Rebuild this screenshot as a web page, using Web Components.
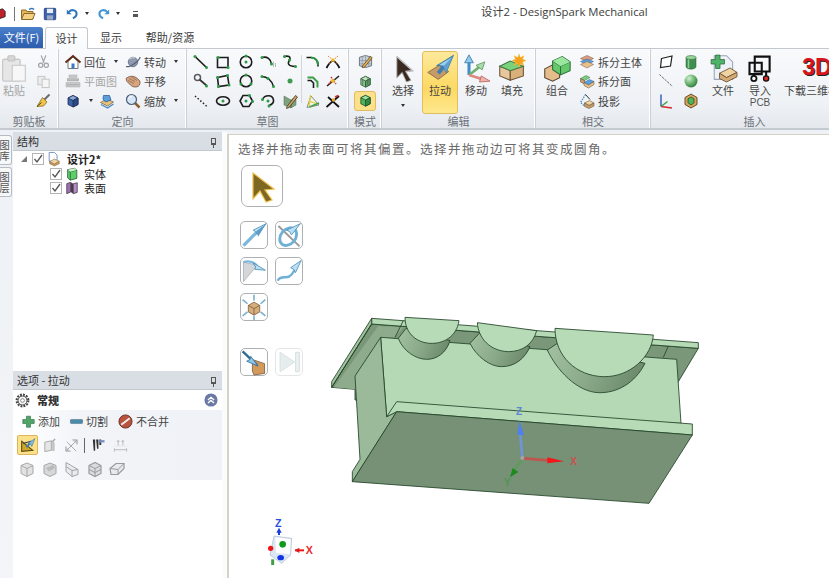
<!DOCTYPE html>
<html lang="zh">
<head>
<meta charset="utf-8">
<title>DesignSpark Mechanical</title>
<style>
  html, body { margin: 0; height: 100%; background: #fff; overflow: hidden; }
  body { font: 11px "Noto Sans CJK SC", "Noto Sans", sans-serif; color: #444; }
</style>
</head>
<body>
<dsm-app></dsm-app>
<script>
const dot = (x, y, r = 3, c = "#2f9a46") => `<circle cx="${x}" cy="${y}" r="${r}" fill="${c}"/>`;
const ln = (d, c = "#1c1c1c", w = 3.2) => `<path d="${d}" fill="none" stroke="${c}" stroke-width="${w}"/>`;
const cube = (a, b, c, e = "#555") => `<path d="M6 10 16 5l10 5v13l-10 5-10-5z" fill="${a}" stroke="${e}" stroke-width="1.6"/><path d="M6 10l10 5 10-5-10-5z" fill="${b}" stroke="${e}" stroke-width="1.6"/><path d="M16 15v13l10-5V10z" fill="${c}" stroke="${e}" stroke-width="1.6"/>`;
const grey = (s) => `<g opacity=".42" style="filter:grayscale(1)">${s}</g>`;

const icons = {
  // quick access
  app: `<path d="M-14 12 8 4l6 6v12L-8 30z" fill="#c0202a" stroke="#222" stroke-width="2"/>`,
  open: `<path d="M3 8h9l2 3h12v15H3z" fill="#e5b35a" stroke="#8a6a2c" stroke-width="2"/><path d="M8 15h22l-5 12H3z" fill="#f3d083" stroke="#8a6a2c" stroke-width="2"/><path d="M18 7c4-3 7-3 10 0" fill="none" stroke="#3b79b8" stroke-width="3"/>`,
  save: `<rect x="3" y="3" width="26" height="26" rx="2" fill="#3c62ad" stroke="#233f7a" stroke-width="2"/><rect x="9" y="4" width="14" height="10" fill="#e8eef6"/><rect x="9" y="19" width="14" height="10" fill="#99a9c5"/>`,
  undo: `<path d="M7 12c8-8 20-4 19 6-1 6-5 8-9 10" fill="none" stroke="#2e75c2" stroke-width="5"/><path d="M2 6v12h12z" fill="#2e75c2"/>`,
  redo: `<path d="M25 12c-8-8-20-4-19 6 1 6 5 8 9 10" fill="none" stroke="#3f93d6" stroke-width="5"/><path d="M30 6v12H18z" fill="#3f93d6"/>`,
  // clipboard
  paste: `<rect x="3" y="6" width="20" height="25" rx="2" fill="#e6e6e6" stroke="#c9c9c9" stroke-width="1.5"/><rect x="9" y="2" width="8" height="6" rx="1" fill="#d6d6d6" stroke="#bdbdbd"/><rect x="14" y="13" width="15" height="18" fill="#f7f7f7" stroke="#cfcfcf" stroke-width="1.5"/>`,
  cut: `<g stroke="#a3a3a3" fill="none" stroke-width="2.6"><path d="M11 3l6 16M21 3l-6 16"/><circle cx="10" cy="24" r="4.5"/><circle cx="22" cy="24" r="4.5"/></g>`,
  copy: `<rect x="4" y="5" width="15" height="18" fill="#ececec" stroke="#c2c2c2" stroke-width="2"/><rect x="13" y="11" width="15" height="18" fill="#f5f5f5" stroke="#c2c2c2" stroke-width="2"/>`,
  brush: `<path d="M19 13 29 3" stroke="#6a6a6a" stroke-width="4"/><path d="M15 9l9 9-7 8-13 1z" fill="#eec44c" stroke="#8a6d1e" stroke-width="1.6"/><path d="M4 27l9-8" stroke="#55431a" stroke-width="2"/>`,
  // orient
  home: `<path d="M6 15v14h20V15L16 6z" fill="#fff" stroke="#777" stroke-width="2"/><path d="M1 17 16 4l15 13" fill="none" stroke="#5f2f18" stroke-width="4"/><rect x="13" y="19" width="6" height="10" fill="#3b78c2"/>`,
  spin: `<circle cx="16" cy="16" r="9.5" fill="#8f9ab0" stroke="#5a6479" stroke-width="1.5"/><path d="M2 25C10 28 30 12 30 6" fill="none" stroke="#56607a" stroke-width="2.4"/><path d="M9 10c4-3 8-3 11-2" stroke="#d8dee9" stroke-width="2" fill="none"/>`,
  plan: `<g fill="#c9c9c9" stroke="#a8a8a8"><path d="M2 19h28v9H2z"/><rect x="8" y="4" width="16" height="5"/><rect x="5" y="11" width="22" height="5"/></g><path d="M5 23.5h22M5 14h22" stroke="#8e8e8e" stroke-width="2" stroke-dasharray="2 2"/>`,
  pan: `<path d="M2 11c6-5 13-6 20-2l7 6c2 3 1 10-3 12-6 2-11 1-15-3L4 17z" fill="#d9a57e" stroke="#7a5a48" stroke-width="1.8"/><path d="M8 11l12 6M6 15l12 6M13 8l11 7" stroke="#8a6a58" stroke-width="1.6"/>`,
  bluecube: cube("#3a63a8", "#8aa9d8", "#2b4a85", "#1f2e52"),
  stack: `<path d="M3 19 15 12l14 6-12 8z" fill="#e8c27e" stroke="#7a6a48" stroke-width="1.6"/><path d="M4 23l13 7 12-8" fill="none" stroke="#4a88c8" stroke-width="2.6"/><path d="M9 5h12l3 9-11 4-5-6z" fill="#5aa0de" stroke="#2f5f96" stroke-width="1.6"/>`,
  zoom: `<path d="M20 20l9 9" stroke="#8a6232" stroke-width="5"/><circle cx="13" cy="13" r="10" fill="#d5e6f7" stroke="#4f5f78" stroke-width="2.4"/><path d="M7 12c1-4 4-5 7-5" stroke="#fff" stroke-width="2" fill="none"/>`,
  // sketch
  line: ln("M4 5 27 27", "#1c1c1c", 3.4) + dot(4, 5) + dot(27, 27),
  tline: `<circle cx="9" cy="9" r="6" fill="none" stroke="#5a5a5a" stroke-width="3"/>` + ln("M13 13 27 25", "#333", 3.4) + dot(27, 26),
  cline: `<path d="M4 6 28 27" stroke="#222" stroke-width="3" stroke-dasharray="3 4"/>`,
  rect: ln("M5 7h21v20H5z") + dot(6, 7) + dot(26, 27),
  trect: ln("M5 9 25 5l3 19L7 27z") + dot(5, 9) + dot(25, 5) + dot(28, 24) + dot(7, 27),
  ellipse: `<ellipse cx="16" cy="16" rx="13" ry="8.5" fill="none" stroke="#1c1c1c" stroke-width="3.2"/>` + dot(16, 16),
  circle: `<circle cx="16" cy="16" r="11.5" fill="none" stroke="#1c1c1c" stroke-width="3.2"/>` + dot(16, 16) + dot(16, 4),
  circle3: `<circle cx="16" cy="16" r="11.5" fill="none" stroke="#1c1c1c" stroke-width="3.2"/>` + dot(16, 4) + dot(6, 22) + dot(26, 22),
  poly: ln("M10 5h13l6 11-7 11H10L4 16z") + dot(16, 16) + dot(23, 5) + dot(29, 17),
  arc: ln("M4 7c10-3 18 3 19 13") + dot(4, 7) + dot(23, 20) + `<path d="M27 15v11M31 18v8" stroke="#9ab09a" stroke-width="1.6"/>`,
  arc2: ln("M4 7c10 0 20 8 23 20") + dot(4, 7) + dot(16, 11) + dot(27, 27),
  arc3: ln("M5 13c4-9 20-11 22 1 1 7-6 10-9 11") + dot(5, 13) + dot(16, 16) + dot(18, 26),
  spline: ln("M5 5c6-2 14 0 10 7s-4 12 12 13") + dot(5, 5) + dot(15, 12) + dot(27, 25),
  point: dot(16, 16, 5, "#3f9a53"),
  pencilg: `<path d="M4 6 18 14v16L4 24zM18 14 28 8v16l-10 6z" fill="#7ea27d" stroke="#4e6b4d"/><path d="M10 27 27 5l4 3-17 21-5 2z" fill="#c9a46a" stroke="#3e2e18" stroke-width="1.5"/>`,
  fillet: ln("M3 7h9c9 0 14 7 14 15v3", "#1c1c1c") + ln("M12 7c9 0 14 7 14 15", "#2f9a46", 4),
  offset: ln("M5 15h7l5 5v10", "#1c1c1c") + ln("M5 9h11l9 9v11", "#3f9f45", 4),
  project: `<path d="M4 29 28 24 12 6z" fill="#eef3ea" stroke="#8a8a8a" stroke-width="2"/><path d="M8 27 11 4M8 16l14 5" stroke="#e6cf30" stroke-width="2.6"/><path d="M9 28 28 20" stroke="#3f9f45" stroke-width="3"/>`,
  trim: ln("M3 28C8 18 14 14 16 13M29 28C24 18 18 14 16 13", "#111", 3.6) + `<path d="M6 4 26 20M26 4 7 20" stroke="#e8852a" stroke-width="2" stroke-dasharray="3 2"/>` + dot(16, 12, 3.5, "#e9c12f"),
  trim2: ln("M4 26 28 6", "#222", 3.2) + `<path d="M12 8l10 14M8 22l4-6" stroke="#d9342a" stroke-width="3" stroke-dasharray="3 2"/>` + dot(16, 16, 4, "#eab630"),
  trim3: ln("M3 28 28 6M6 8l22 20", "#111", 3.4) + dot(17, 14, 3.5, "#e9a52f") + `<path d="M20 8l6-3" stroke="#d9342a" stroke-width="3"/>`,
  // mode
  msketch: `<path d="M3 7 16 3l13 4v18l-13 4-13-4z" fill="#c6d0d8" stroke="#4f5a64" stroke-width="1.6"/><path d="M9 6v20M16 4v24M23 6v20M3 14l26 0M3 21h26" stroke="#6f7a85"/><path d="M10 25 27 5l3 3-16 20-5 1z" fill="#e6b14c" stroke="#4e3612" stroke-width="1.4"/>`,
  msection: cube("#8dc28e", "#c2e3c2", "#5c9b66", "#2f5a38") + `<path d="M10 11v13M21 9v14M16 16v11" stroke="#2f5a38" stroke-width="1.2"/>`,
  msolid: cube("#4fb35a", "#9fe39f", "#2f8a44", "#1d4a28"),
  // edit
  select: `<path d="M9 3 27 19l-8 1 6 10-5 2-5-11-6 6z" fill="#3a2a22" stroke="#a5a5a5" stroke-width="1"/><path d="M9 3 27 19l-8 1" fill="none" stroke="#bcbcbc" stroke-width="1.6"/>`,
  pull: `<path d="M2 21 15 13l11 7-12 9z" fill="#c79a68" stroke="#8a6a42" stroke-width="1"/><path d="M14 22 22 12" stroke="#3d7fb0" stroke-width="4.5"/><path d="M31 2 13 13l7 1 3 7z" fill="#9bd0ee" stroke="#3f7ea8" stroke-width="1.2"/><path d="M31 2 20 14l3 7z" fill="#5fa0cf"/>`,
  move: `<path d="M8 24V8" stroke="#3f8fc4" stroke-width="3.5"/><path d="M8 1l5 9H3z" fill="#8ecbee" stroke="#3f7ea8"/><path d="M8 24 21 14" stroke="#6bb06b" stroke-width="3"/><path d="M26 9l-3 9-7-5z" fill="#aadcae" stroke="#5f9a5f"/><path d="M8 24 24 29" stroke="#d98b84" stroke-width="3"/><path d="M32 31l-12 1 2-7z" fill="#f0b2aa" stroke="#b86a62"/>`,
  fill: `<path d="M2 14 14 19v11L2 25z" fill="#e7c79b" stroke="#6b543a" stroke-width="1.2"/><path d="M14 19 29 14v11L14 30z" fill="#d9b07a" stroke="#6b543a" stroke-width="1.2"/><path d="M2 14 14 8l15 6-15 5z" fill="#79d27a" stroke="#3e7a48" stroke-width="1.2"/><path d="M24 0l1.5 4 4-2-1.5 4 4 1.5-4 1.5 1.5 4-4-2-1.5 4-1.5-4-4 2 1.5-4-4-1.5 4-1.5-1.5-4 4 2z" fill="#f7a11f" stroke="#e8c33a" stroke-width=".6"/>`,
  combine: `<path d="M2 17 10 13l9 4v10l-8 4-9-4z" fill="#e4bd8a" stroke="#544231" stroke-width="1.2"/><path d="M11 8 22 3l9 6v10l-11 5-9-6z" fill="#63c96b" stroke="#2f6d3a" stroke-width="1.2"/><path d="M11 8l9 6 11-5M20 14v10" fill="none" stroke="#2f6d3a" stroke-width="1.2"/><path d="M11 8l9 6 11-5-9-6z" fill="#9ce79e"/>`,
  splitbody: `<path d="M3 9 16 3l13 6-13 6z" fill="#e09c7e" stroke="#705040"/><path d="M3 15l13 6 13-6-13-5z" fill="#5a9fe0" stroke="#2f5f96"/><path d="M3 21l13 7 13-7-13-6z" fill="#e7c18c" stroke="#705040"/>`,
  splitface: `<path d="M3 11 14 5l8 4-11 6z" fill="#79cf7d" stroke="#3e6a48"/><path d="M3 11v7l8 4v-7z" fill="#c99c68" stroke="#554433"/><path d="M10 19l11-6 9 4-11 7z" fill="#5aa0e0" stroke="#2f5f96"/><path d="M10 19v6l9 5 11-7v-6l-11 7z" fill="#e7c18c" stroke="#554433"/>`,
  projectb: `<path d="M13 3 3 19l7 6" fill="none" stroke="#4a88c8" stroke-width="2.5" stroke-dasharray="3 2"/><path d="M11 20 21 15l9 5-10 5z" fill="#f0d39e" stroke="#554433"/><path d="M11 20v7l9 4 10-5v-6l-10 5z" fill="#c89c66" stroke="#554433"/><path d="M13 3l9 10" stroke="#333" stroke-width="2"/>`,
  // insert
  plane: `<path d="M7 9 28 4l-3 20-20 3z" fill="#fff" stroke="#222" stroke-width="2.4"/>`,
  axis: `<path d="M3 3 29 27" stroke="#555" stroke-width="1.8" stroke-dasharray="5 2"/>`,
  origin: ln("M6 3v24", "#3b63b8", 3) + ln("M6 27l22 3", "#d62a2a", 3) + ln("M6 27l13-10", "#3f9f45", 3),
  cyl: `<path d="M6 7v18c0 7 20 7 20 0V7z" fill="#3f8f4f" stroke="#2b5a35"/><ellipse cx="16" cy="7" rx="10" ry="4" fill="#96d59a" stroke="#2b5a35"/><path d="M11 11v17" stroke="#8cd090" stroke-width="3"/>`,
  sphere: `<defs><radialGradient id="sp" cx=".35" cy=".3" r=".8"><stop offset="0" stop-color="#cfeecf"/><stop offset=".6" stop-color="#5dab62"/><stop offset="1" stop-color="#2a6d38"/></radialGradient></defs><circle cx="16" cy="16" r="13" fill="url(#sp)"/>`,
  shell: `<path d="M16 2 28 9v14l-12 7L4 23V9z" fill="#d9a35c" stroke="#5a4222" stroke-width="1.8"/><path d="M16 8l6 3.5v8L16 24l-6-4.5v-8z" fill="#4fb35a" stroke="#1d4a28" stroke-width="1.5"/>`,
  file: `<path d="M6 2h14l7 7v20H6z" fill="#eef2f8" stroke="#9aa4b4" stroke-width="1.2"/><path d="M4 11h6V5h6v6h6v6h-6v6h-6v-6H4z" transform="translate(-1 -3) scale(.85)" fill="#4fb36a" stroke="#28683c"/><path d="M12 22 24 16l8 5-12 6z" fill="#f0d39e" stroke="#6b543a"/><path d="M12 22v6l8 4 12-6v-5l-12 6z" fill="#d6ac74" stroke="#6b543a"/>`,
  pcb: `<path d="M10 3h17v17H10z M4 10h14v13H4z" fill="none" stroke="#111" stroke-width="2.4"/><path d="M9 23v3M23 20v6" stroke="#111" stroke-width="2.4"/><circle cx="9" cy="28" r="3" fill="#fff" stroke="#111" stroke-width="2"/><circle cx="23" cy="28" r="3" fill="#d62a2a" stroke="#111" stroke-width="1.5"/>`,
  // tree
  docbox: `<path d="M5 1h12l6 6v14H5z" fill="#fff" stroke="#5a7cb4" stroke-width="1.8"/><path d="M6 22 17 16l11 5-11 7z" fill="#f0d39e" stroke="#6b543a"/><path d="M6 22v5l11 5 11-5v-6l-11 7z" fill="#d09a58" stroke="#6b543a"/>`,
  treecube: `<path d="M6 6 22 3l5 4v19l-15 4-6-5z" fill="#5bcf6a" stroke="#2c5a35" stroke-width="1.8"/><path d="M6 6l6 5 15-4M12 11v19" fill="none" stroke="#2c5a35" stroke-width="1.8"/><path d="M6 6 22 3l5 4-15 4z" fill="#c8f2c8"/>`,
  surface: `<path d="M4 6 13 3v22l-9 4z" fill="#a06fb0" stroke="#332a3a" stroke-width="1.6"/><path d="M13 3l6 3v23l-6-4z" fill="#4a3d55"/><path d="M19 6l9-2v22l-9 3z" fill="#b68cc6" stroke="#332a3a" stroke-width="1.6"/>`,
  // palette
  paGold: `<path d="M7 3 28 19l-9 1 7 10-6 2-6-11-7 8z" fill="#7d6722" stroke="#eec04a" stroke-width="1.2"/>`,
  paPull: `<path d="M3 29 20 12" stroke="#7bb8dc" stroke-width="4"/><path d="M31 2 15 10l3 2 2 3z" fill="#b9e0f4" stroke="#4c8db6"/><path d="M31 2 18 12l2 3 1 3z" fill="#5d9dc8"/>`,
  paRevolve: `<path d="M3 5 29 30" stroke="#9a9a9a" stroke-width="2.4"/><ellipse cx="15" cy="18" rx="9" ry="12" transform="rotate(40 15 18)" fill="none" stroke="#6fb0d6" stroke-width="3.5"/><path d="M30 2 13 10l4 2 2 4z" fill="#b9e0f4" stroke="#4c8db6"/>`,
  paDraft: `<path d="M3 5v24l17-20z" fill="#d4d7da" stroke="#aab0b6"/><path d="M3 5c7-2 13 0 17 5" stroke="#7bb8dc" stroke-width="3" fill="none"/><path d="M30 15 15 6l3 5-1 3z" fill="#b9e0f4" stroke="#4c8db6"/>`,
  paSweep: `<path d="M2 28c3-7 10-3 14-5s5-5 8-10" stroke="#6fb0d6" stroke-width="3" fill="none"/><path d="M31 3 18 12l4 2 2 4z" fill="#b9e0f4" stroke="#4c8db6"/>`,
  paExplode: `<path d="M16 10 23 14v8l-7 4-7-4v-8z" fill="#d8ad7c" stroke="#7a5c3c"/><path d="M16 18v8M9 14l7 4 7-4" stroke="#7a5c3c" fill="none"/><path d="M16 1v7M16 32v-5M2 7l6 5M30 7l-6 5M2 27l6-5M30 27l-6-5" stroke="#7bb0d0" stroke-width="2"/>`,
  paInto: `<path d="M14 13 29 18v12l-13 2-2-5z" fill="#d49a5c" stroke="#7a5c3c"/><path d="M2 3 20 20" stroke="#2f6d96" stroke-width="3"/><path d="M21 21 7 15l4-2 1-4z" fill="#8fc8ea" stroke="#2f6d96"/>`,
  paEnd: `<path d="M5 4v24l18-12z" fill="#e6eded" stroke="#d4dddd"/><path d="M24 4h5v24h-5z" fill="#e9efef" stroke="#d4dddd"/>`,
  // options
  gear: `<circle cx="16" cy="16" r="12.5" fill="none" stroke="#444" stroke-width="4.5" stroke-dasharray="4 2.5"/><circle cx="16" cy="16" r="9.5" fill="#f4f4f4" stroke="#444" stroke-width="2"/><circle cx="16" cy="16" r="4" fill="#fff" stroke="#666" stroke-width="1.5"/>`,
  up: `<circle cx="16" cy="16" r="15" fill="#6a79a8"/><path d="M9 16l7-6 7 6M9 23l7-6 7 6" fill="none" stroke="#fff" stroke-width="3"/>`,
  plus: `<path d="M11 3h10v8h9v10h-9v9H11v-9H2V11h9z" fill="#4fa664" stroke="#2b6a48" stroke-width="1.5"/>`,
  minus: `<rect x="1" y="11" width="30" height="10" rx="2" fill="#4b8aa6" stroke="#2b5a78"/>`,
  nomerge: `<circle cx="16" cy="16" r="14" fill="#b9533f" stroke="#6a2f24" stroke-width="2"/><path d="M7 23 25 9" stroke="#eee" stroke-width="4"/>`,
  oPull: `<path d="M3 7 24 24 3 26z" fill="#caa72a" stroke="#5e4e10" stroke-width="2" transform="translate(2 1)"/><path d="M8 12 23 8" stroke="#444" stroke-width="2"/><path d="M14 19 24 8" stroke="#3d7fb0" stroke-width="4"/><path d="M30 3 17 12l5 1 2 5z" fill="#84bfe4" stroke="#2f6d96"/>`,
  oCube: grey(`<path d="M6 9 20 6v20L6 29z" fill="#ccc" stroke="#333" stroke-width="2"/><path d="M20 6l6 4v17l-6-1z" fill="#888" stroke="#333"/><path d="M22 8l6-6" stroke="#333" stroke-width="3"/>`),
  oCross: grey(`<path d="M4 28 28 4M6 8l20 20M18 4h10v10M4 18v10h10" stroke="#333" stroke-width="2" fill="#aaa"/>`),
  oCaliper: `<path d="M6 3h5v24H8zM13 3h5v20h-3zM20 3h4v12h-4z" fill="#333"/><path d="M20 7h11" stroke="#7a8fc0" stroke-width="5"/>`,
  oGap: `<path d="M3 22v7M29 22v7M3 25h26" stroke="#aaa" stroke-width="1.6"/><path d="M11 4v12M21 4v12M8 7h6M18 7h6" stroke="#bbb" stroke-width="2"/><path d="M3 17h26" stroke="#ccc" stroke-dasharray="3 2"/>`,
  b1: grey(`<path d="M4 9 16 4l12 5v16l-12 6-12-6z" fill="#bbb" stroke="#333" stroke-width="2"/><path d="M4 9l12 6 12-6M16 15v16" fill="none" stroke="#333" stroke-width="2"/>`),
  b2: grey(`<path d="M4 9 16 4l12 5v16l-12 6-12-6z" fill="#aaa" stroke="#333" stroke-width="2"/><path d="M8 14l14-6 4 6-12 7z" fill="#666"/>`),
  b3: grey(`<path d="M4 3 28 17v10l-12 4L4 21z" fill="#ddd" stroke="#333" stroke-width="2"/><path d="M4 11l12 8 12-2M16 19v12" fill="none" stroke="#333" stroke-width="2"/>`),
  b4: grey(`<path d="M4 9 16 3l12 6v16l-12 6-12-6z" fill="#bbb" stroke="#222" stroke-width="2.4"/><path d="M4 9l12 6 12-6M4 17l12 6 12-6M16 15v16" fill="none" stroke="#222" stroke-width="2"/>`),
  b5: grey(`<path d="M2 15 14 5h16v10l-12 12H4z" fill="#ddd" stroke="#222" stroke-width="2.4"/><path d="M2 15l16 2 12-12M18 17v10" fill="none" stroke="#222" stroke-width="2"/>`)
};

class RbIcon extends HTMLElement {
  connectedCallback() {
    const s = this.getAttribute("size") || 16;
    this.attachShadow({ mode: "open" }).innerHTML = `
      <style>:host{display:inline-flex;flex:none;width:${s}px;height:${s}px} svg{display:block;overflow:visible}</style>
      <svg width="${s}" height="${s}" viewBox="0 0 32 32">${icons[this.getAttribute("name")] || ""}</svg>`;
  }
}

class TitleBar extends HTMLElement {
  constructor() {
    super();
    this.attachShadow({ mode: "open" }).innerHTML = `
    <style>
      :host { display: flex; align-items: center; height: 27px; position: relative; background: #fff; }
      .qat { display: flex; align-items: center; height: 27px; }
      .sep { width: 1px; height: 14px; background: #777; margin: 0 5px 0 1px; }
      .drop { width: 0; height: 0; border: 2.5px solid transparent; border-top: 3px solid #333; border-bottom: 0; margin: 0 8px 0 6px; }
      .title { position: absolute; left: 481px; top: 3px; font: 11.3px/17px "Open Sans", "Noto Sans CJK SC", sans-serif; color: #3c3c3c; white-space: nowrap; }
    </style>
    <div class="qat">
      <rb-icon name="app" size="14" style="margin-left:-1px"></rb-icon>
      <span class="sep"></span>
      <rb-icon name="open" style="margin-right:5px"></rb-icon>
      <rb-icon name="save" size="14" style="margin-left:2px;margin-right:9px"></rb-icon>
      <rb-icon name="undo" size="13"></rb-icon><span class="drop"></span>
      <rb-icon name="redo" size="13"></rb-icon><span class="drop"></span>
      <span style="margin-left:5px;width:5px;height:6px;border-top:1px solid #555;border-bottom:3px solid #555;box-sizing:border-box"></span>
    </div>
    <div class="title">设计2 - DesignSpark Mechanical</div>`;
  }
}

class TabStrip extends HTMLElement {
  constructor() {
    super();
    this.attachShadow({ mode: "open" }).innerHTML = `
    <style>
      :host { display: flex; height: 21px; background: #fff; font-size: 11px; line-height: 20px; position: relative; z-index: 1; }
      .t { box-sizing: border-box; text-align: center; color: #3a3a3a; }
      .file { width: 43px; margin-right: 2px; background: linear-gradient(#4a7fcb, #2c5cac); color: #fff; border-radius: 0 3px 0 0; }
      .on { width: 43px; height: 22px; background: linear-gradient(#fff, #f8f9fb); border: 1px solid #c3c8cf; border-bottom: 0; border-radius: 3px 3px 0 0; }
    </style>
    <div class="t file">文件(F)</div>
    <div class="t on">设计</div>
    <div class="t" style="width:46px">显示</div>
    <div class="t" style="width:72px">帮助/资源</div>`;
  }
}

class RibbonBar extends HTMLElement {
  constructor() {
    super();
    this.attachShadow({ mode: "open" }).innerHTML = `
    <style>
      :host { display: flex; height: 82px; overflow: hidden; flex: none; box-sizing: border-box;
        border-top: 1px solid #c3c8cf; border-bottom: 2px solid #c5cad1;
        background: linear-gradient(#f9fafc, #eef1f5 70%, #e4e8ed); }
    </style><slot></slot>`;
  }
}

class RibbonGroup extends HTMLElement {
  connectedCallback() {
    this.attachShadow({ mode: "open" }).innerHTML = `
    <style>
      :host { display: flex; flex-direction: column; flex: none; box-sizing: border-box; width: ${this.getAttribute("w")}px;
        border-right: 1px solid #ccd0d6; box-shadow: inset -1px 0 0 #fff; }
      .body { display: flex; height: 64px; padding-left: ${this.getAttribute("pad") || 0}px; }
      .label { height: 14px; line-height: 14px; padding-top: 1px; text-align: center; color: #6c7178; font-size: 11px; }
    </style>
    <div class="body"><slot></slot></div>
    <div class="label">${this.getAttribute("label")}</div>`;
  }
}

class RbBig extends HTMLElement {
  connectedCallback() {
    const on = this.hasAttribute("on");
    const off = this.hasAttribute("off");
    this.attachShadow({ mode: "open" }).innerHTML = `
    <style>
      :host { display: flex; flex-direction: column; align-items: center; flex: none; box-sizing: border-box;
        width: ${this.getAttribute("w") || 36}px; height: 63px; margin-top: 2px; padding-top: 3px; border-radius: 3px;
        color: ${off ? "#a5a5a5" : "#444"}; text-align: center; line-height: 13px; white-space: nowrap;
        ${on ? "background: linear-gradient(#fde99b, #fdd963 60%, #fee88f); border: 1px solid #e1bd5e; padding-top: 2px;" : ""} }
      .l { margin-top: 2px; } .arrow { width: 0; height: 0; margin-top: 7px; border: 2.5px solid transparent; border-top: 3px solid #333; border-bottom: 0; }
    </style>
    <rb-icon name="${this.getAttribute("icon")}" size="${this.getAttribute("size") || 28}"></rb-icon>
    <div class="l">${this.getAttribute("label")}</div>
    ${this.hasAttribute("arrow") ? '<div class="arrow"></div>' : ""}
    <slot></slot>`;
  }
}

class RbSmall extends HTMLElement {
  connectedCallback() {
    const label = this.getAttribute("label");
    this.attachShadow({ mode: "open" }).innerHTML = `
    <style>
      :host { display: flex; align-items: center; height: 19.5px; white-space: nowrap; color: ${this.hasAttribute("off") ? "#a5a5a5" : "#444"}; }
      .l { margin-left: 3px; line-height: 14px; }
      .arrow { width: 0; height: 0; margin-left: 8px; border: 2.5px solid transparent; border-top: 3px solid #333; border-bottom: 0; }
    </style>
    <rb-icon name="${this.getAttribute("icon")}"></rb-icon>
    ${label ? `<span class="l">${label}</span>` : ""}
    ${this.hasAttribute("arrow") ? '<span class="arrow"></span>' : ""}
    <slot></slot>`;
  }
}

class IconGrid extends HTMLElement {
  connectedCallback() {
    const cols = this.getAttribute("cols") || 1;
    const cw = this.getAttribute("cw") || 22;
    this.attachShadow({ mode: "open" }).innerHTML = `
    <style>
      :host { display: grid; grid-template-columns: repeat(${cols}, ${cw}px); grid-auto-rows: 19.5px; padding-top: 3px; justify-items: center; align-items: center; flex: none; }
    </style><slot></slot>`;
  }
}

class SidePanel extends HTMLElement {
  connectedCallback() {
    this.attachShadow({ mode: "open" }).innerHTML = `
    <style>
      :host { display: flex; flex-direction: column; min-height: 0; background: #fff; }
      header { display: flex; align-items: center; justify-content: space-between; flex: none; height: 18px; padding: 0 6px 0 4px;
        background: #d9dee5; color: #333; font-size: 11px; border-bottom: 1px solid #c2c8d0; }
      .pin { width: 5px; height: 7px; border: 1px solid #555; border-bottom-width: 2px; box-sizing: border-box; position: relative; }
      .pin::after { content: ""; position: absolute; left: 1px; top: 5px; width: 1px; height: 4px; background: #555; }
      .b { flex: 1; min-height: 0; }
    </style>
    <header><span>${this.getAttribute("label")}</span><span class="pin"></span></header>
    <div class="b"><slot></slot></div>`;
  }
}

class TreeRow extends HTMLElement {
  connectedCallback() {
    const root = this.hasAttribute("root");
    this.attachShadow({ mode: "open" }).innerHTML = `
    <style>
      :host { display: flex; align-items: center; height: 14.5px; padding-left: ${root ? 8 : 37}px; color: #222; font-size: 11px; }
      .tri { width: 0; height: 0; border-left: 6px solid transparent; border-bottom: 6px solid #777; margin-right: 5px; }
      .box { box-sizing: border-box; width: 12px; height: 12px; border: 1px solid #b5b5b5; background: #fff; display: block; }
      .box svg { display: block; }
      .t { ${root ? "font-weight: 700; margin-left: 6px;" : "margin-left: 5px;"} line-height: 14px; }
    </style>
    ${root ? '<span class="tri"></span>' : ""}
    <span class="box"><svg width="10" height="10" viewBox="0 0 10 10"><path d="M1.5 5l2.5 3 5-7" fill="none" stroke="#555" stroke-width="1.3"/></svg></span>
    <rb-icon name="${this.getAttribute("icon")}" size="14" style="margin-left:3px"></rb-icon>
    <span class="t">${this.getAttribute("label")}</span>`;
  }
}

class OptionsBody extends HTMLElement {
  constructor() {
    super();
    this.attachShadow({ mode: "open" }).innerHTML = `
    <style>
      :host { display: block; }
      .head { display: flex; align-items: center; height: 20px; padding: 0 4px 0 2px; font-weight: 700; color: #333; font-size: 11px; }
      .head b { margin-left: 7px; } .head rb-icon:last-child { margin-left: auto; }
      .area { height: 70px; margin-left: 7px; background: linear-gradient(90deg, #fff, #f2f4f8 30%, #eff2f6); box-sizing: border-box; padding-top: 1px; }
      .row { display: flex; align-items: center; color: #444; }
      .opt { display: flex; align-items: center; }
      .opt span { margin-left: 3px; }
      .r1 { height: 20px; padding-left: 2px; }
      .r2 { height: 22px; margin-top: 3px; }
      .act { display: flex; align-items: center; justify-content: center; box-sizing: border-box; width: 21px; height: 20px; margin-left: -3px; background: #fde08a; border: 1px solid #dcb65a; border-radius: 2px; }
      .r3 { height: 20px; margin-top: 3px; }
    </style>
    <div class="head"><rb-icon name="gear" size="15"></rb-icon><b>常规</b><rb-icon name="up" size="14"></rb-icon></div>
    <div class="area">
      <div class="row r1">
        <div class="opt"><rb-icon name="plus" size="13"></rb-icon><span>添加</span></div>
        <div class="opt" style="margin-left:10px"><rb-icon name="minus" size="13"></rb-icon><span>切割</span></div>
        <div class="opt" style="margin-left:10px"><rb-icon name="nomerge" size="15"></rb-icon><span>不合并</span></div>
      </div>
      <div class="row r2">
        <div class="act"><rb-icon name="oPull" size="17"></rb-icon></div>
        <rb-icon name="oCube" size="15" style="margin-left:4px"></rb-icon>
        <rb-icon name="oCross" size="15" style="margin-left:7px"></rb-icon>
        <span style="width:1px;height:15px;background:#666;margin-left:5px"></span>
        <rb-icon name="oCaliper" size="15" style="margin-left:5px"></rb-icon>
        <rb-icon name="oGap" size="15" style="margin-left:8px"></rb-icon>
      </div>
      <div class="row r3">
        <rb-icon name="b1" size="16" style="margin-left:-1px"></rb-icon>
        <rb-icon name="b2" size="16" style="margin-left:6.5px"></rb-icon>
        <rb-icon name="b3" size="16" style="margin-left:6.5px"></rb-icon>
        <rb-icon name="b4" size="16" style="margin-left:6.5px"></rb-icon>
        <rb-icon name="b5" size="16" style="margin-left:6.5px"></rb-icon>
      </div>
    </div>`;
  }
}

class ToolBtn extends HTMLElement {
  connectedCallback() {
    const s = +(this.getAttribute("size") || 28);
    const off = this.hasAttribute("off");
    this.attachShadow({ mode: "open" }).innerHTML = `
    <style>
      :host { display: flex; align-items: center; justify-content: center; box-sizing: border-box; width: ${s}px; height: ${s}px;
        border: 1.5px solid ${off ? "#e4e6e6" : "#aeb1b3"}; border-radius: ${s > 30 ? 7 : 5}px; background: #fff; }
    </style>
    <rb-icon name="${this.getAttribute("icon")}" size="${s > 30 ? 32 : 26}"></rb-icon>`;
  }
}

class ModelView extends HTMLElement {
  constructor() {
    super();
    const e = 'stroke="#24452a" stroke-width="2.6" stroke-linejoin="round"';
    this.attachShadow({ mode: "open" }).innerHTML = `
    <style>
      :host { position: absolute; left: 91px; top: 165px; display: block; width: 390px; height: 215px; }
      svg { display: block; overflow: visible; }
      text { font: 700 30px "Liberation Sans", sans-serif; }
    </style>
    <svg width="390" height="215" viewBox="0 0 1170 645">
      <defs>
        <linearGradient id="cyl" x1="0" x2="1" y1="0" y2=".25"><stop offset="0" stop-color="#a3c2a1"/><stop offset=".55" stop-color="#8aa988"/><stop offset="1" stop-color="#6f8d6e"/></linearGradient>
      </defs>
      <path d="M35 262 155 72 1135 145 1075 245 1040 300H105L105 268z" fill="#7b977a" ${e}/>
      <path d="M155 55 1135 128V145L155 72z" fill="#b7dab6" ${e}/>
      <path d="M155 55 35 245V262L155 72z" fill="#a2c2a0" ${e}/>
      <path d="M175 78 250 82 225 112 182 112 105 228 105 268 42 262z" fill="#8eac8c"/>
      <path d="M155 72 35 262M250 62 225 112M1045 138 1030 172" fill="none" ${e}/>
      <path d="M182 112 1070 178 1083 370 200 350z" fill="#b6d9b5" ${e}/>
      <path d="M182 112 105 228 120 478 97 515V545L230 335 200 350z" fill="#9bba99" ${e}/>
      <path d="M258 85 235 115C250 155 290 178 320 178 350 178 378 160 390 122z" fill="url(#cyl)" ${e}/>
      <path d="M255 52 417 62C410 110 370 132 330 130 290 128 255 100 255 52z" fill="#b8dbb7" ${e}/>
      <path d="M478 100 450 130C470 170 510 200 545 200 585 200 615 175 630 140z" fill="url(#cyl)" ${e}/>
      <path d="M472 68 650 92C640 130 610 155 565 155 510 153 475 115 472 68z" fill="#b8dbb7" ${e}/>
      <path d="M712 130 682 150C710 210 770 275 835 278 890 280 945 250 975 190z" fill="url(#cyl)" ${e}/>
      <path d="M705 85 1000 105C995 170 930 232 850 230 770 228 705 170 705 85z" fill="#b8dbb7" ${e}/>
      <path d="M230 305 1117 372V405L230 335 200 350z" fill="#b8dbb7" ${e}/>
      <path d="M230 335 1117 405 987 610 97 545z" fill="#779176" ${e}/>
      <path d="M607 473 600 395" stroke="#6f94d8" stroke-width="8"/>
      <path d="M598 362 612 405H592z" fill="#4f80f0"/>
      <path d="M610 475 685 481" stroke="#c0544f" stroke-width="8"/>
      <path d="M732 484 682 472V490z" fill="#f01818"/>
      <path d="M604 480 583 510" stroke="#5f9a5a" stroke-width="7"/>
      <path d="M570 532 578 504 595 516z" fill="#1e8a1e"/>
      <circle cx="607" cy="474" r="6" fill="#a5a5a5"/>
      <text x="597" y="345" text-anchor="middle" fill="#5f84d4">Z</text>
      <text x="761" y="496" text-anchor="middle" fill="#c8524d">X</text>
      <text x="562" y="559" text-anchor="middle" fill="#4f9650">Y</text>
    </svg>`;
  }
}

class ViewTriad extends HTMLElement {
  constructor() {
    super();
    this.attachShadow({ mode: "open" }).innerHTML = `
    <style>
      :host { position: absolute; left: 31px; top: 375px; display: block; width: 65px; height: 65px; }
      svg { display: block; overflow: visible; }
      text { font: 700 32px "Liberation Sans", sans-serif; }
    </style>
    <svg width="65" height="65" viewBox="0 0 195 195">
      <path d="M38 148V165" stroke="#3f9f45" stroke-width="9"/>
      <path d="M42 78 95 85 92 135 65 160 30 135z" fill="#dbe7f4" stroke="#a9bcd2" stroke-width="2"/>
      <path d="M46 82 92 88 90 133 48 128z" fill="#fff"/>
      <circle cx="68" cy="103" r="10" fill="#0f9a1e"/>
      <circle cx="32" cy="115" r="8" fill="#f01414"/>
      <ellipse cx="62" cy="143" rx="10" ry="8" fill="#1434e6"/>
      <path d="M57 60V75" stroke="#1c3fd8" stroke-width="6"/><path d="M57 53 65 68H49z" fill="#1c3fd8"/>
      <path d="M105 121H132" stroke="#e81818" stroke-width="6"/><path d="M104 121 118 113V129z" fill="#e81818"/>
      <text x="55" y="52" text-anchor="middle" fill="#2a4fe0">Z</text>
      <text x="148" y="133" text-anchor="middle" fill="#e82a2a">X</text>
    </svg>`;
  }
}

class CanvasView extends HTMLElement {
  constructor() {
    super();
    this.attachShadow({ mode: "open" }).innerHTML = `
    <style>
      :host { display: block; flex: 1; position: relative; overflow: hidden; box-sizing: border-box; background: #fff; margin-top: 2px;
        border-left: 2px solid #d6d2c6; border-top: 1px solid #d6d2c6; padding: 5px 0 0 9px; }
      .hint { font-size: 12.5px; letter-spacing: 1.5px; line-height: 17px; color: #6a6a6a; white-space: nowrap; }
      .tools { display: flex; flex-direction: column; margin: 8px 0 0 2px; }
      .grid { display: grid; grid-template-columns: 28px 28px; gap: 8px 7px; }
    </style>
    <div class="hint">选择并拖动表面可将其偏置。选择并拖动边可将其变成圆角。</div>
    <div class="tools">
      <tool-btn icon="paGold" size="42" style="margin-left:1px"></tool-btn>
      <div class="grid" style="margin-top:14px">
        <tool-btn icon="paPull"></tool-btn><tool-btn icon="paRevolve"></tool-btn>
        <tool-btn icon="paDraft"></tool-btn><tool-btn icon="paSweep"></tool-btn>
        <tool-btn icon="paExplode"></tool-btn>
      </div>
      <div class="grid" style="margin-top:27px">
        <tool-btn icon="paInto"></tool-btn><tool-btn icon="paEnd" off></tool-btn>
      </div>
    </div>
    <model-view></model-view>
    <view-triad></view-triad>`;
  }
}

class Big3d extends HTMLElement {
  constructor() {
    super();
    this.attachShadow({ mode: "open" }).innerHTML = `
    <style>
      :host { display: flex; flex-direction: column; align-items: center; flex: none; width: 66px; margin-top: 2px; padding-top: 3px; white-space: nowrap; line-height: 13px; color: #444; }
      .d { height: 28px; font: 700 23px/26px "Liberation Sans", sans-serif; color: #d8151c; text-shadow: 1px 1px 0 #222; }
      .l { margin-top: 2px; }
    </style>
    <div class="d">3D</div><div class="l">下载三维模型</div>`;
  }
}

class DsmApp extends HTMLElement {
  constructor() {
    super();
    this.attachShadow({ mode: "open" }).innerHTML = `
    <style>
      :host { display: flex; flex-direction: column; width: 829px; height: 578px; overflow: hidden; background: #fff; }
      .main { flex: 1; display: flex; min-height: 0; background: #eef1f5; padding-top: 2px; }
      .strip { flex: none; width: 13px; box-sizing: border-box; padding-top: 3px; background: linear-gradient(#eef1f5, #f3f5f8); }
      .vt { box-sizing: border-box; width: 12px; height: 30px; margin-bottom: 2px; overflow: hidden; background: #f6f8fa; border: 1px solid #b7bcc3; border-left: 0; border-radius: 0 3px 3px 0;
        font-size: 10.5px; line-height: 13px; color: #555; writing-mode: vertical-rl; text-align: center; }
      .side { flex: none; width: 209px; display: flex; flex-direction: column; min-height: 0; }
      .gap { flex: none; width: 5px; background: #fbfcfd; }
      side-panel.a { height: 239px; flex: none; }
      side-panel.b { flex: 1; }
      .sep { width: 1px; background: #d3d6db; margin: 6px 1px 10px 0; }
      .pcb { font: 10px/12px "Liberation Sans", sans-serif; color: #555; }
    </style>
    <title-bar></title-bar>
    <tab-strip></tab-strip>
    <ribbon-bar>
      <ribbon-group label="剪贴板" w="59">
        <rb-big icon="paste" label="粘贴" w="28" off></rb-big>
        <icon-grid cols="1" cw="20" style="margin-left:5px">
          <rb-icon name="cut" size="15"></rb-icon><rb-icon name="copy" size="15"></rb-icon><rb-icon name="brush" size="16"></rb-icon>
        </icon-grid>
      </ribbon-group>
      <ribbon-group label="定向" w="128" pad="6">
        <icon-grid cols="2" cw="60" style="justify-items:start">
          <rb-small icon="home" label="回位" arrow></rb-small><rb-small icon="spin" label="转动" arrow></rb-small>
          <rb-small icon="plan" label="平面图" off></rb-small><rb-small icon="pan" label="平移"></rb-small>
          <rb-small icon="bluecube" arrow><rb-icon name="stack" style="margin-left:6px"></rb-icon></rb-small><rb-small icon="zoom" label="缩放" arrow></rb-small>
        </icon-grid>
      </ribbon-group>
      <ribbon-group label="草图" w="162" pad="3">
        <icon-grid cols="5" cw="22.25">
          <rb-icon name="line"></rb-icon><rb-icon name="rect"></rb-icon><rb-icon name="circle"></rb-icon><rb-icon name="arc"></rb-icon><rb-icon name="spline"></rb-icon>
          <rb-icon name="tline"></rb-icon><rb-icon name="trect"></rb-icon><rb-icon name="circle3"></rb-icon><rb-icon name="arc2"></rb-icon><rb-icon name="point"></rb-icon>
          <rb-icon name="cline"></rb-icon><rb-icon name="ellipse"></rb-icon><rb-icon name="poly"></rb-icon><rb-icon name="arc3"></rb-icon><rb-icon name="pencilg"></rb-icon>
        </icon-grid>
        <span class="sep"></span>
        <icon-grid cols="2" cw="20">
          <rb-icon name="fillet"></rb-icon><rb-icon name="trim"></rb-icon>
          <rb-icon name="offset"></rb-icon><rb-icon name="trim2"></rb-icon>
          <rb-icon name="project"></rb-icon><rb-icon name="trim3"></rb-icon>
        </icon-grid>
      </ribbon-group>
      <ribbon-group label="模式" w="33" pad="5">
        <icon-grid cols="1" cw="22">
          <rb-icon name="msketch" size="15"></rb-icon><rb-icon name="msection" size="15"></rb-icon>
          <span style="display:flex;align-items:center;justify-content:center;box-sizing:border-box;width:22px;height:19.5px;background:#fde08a;border:1px solid #e0bb60;border-radius:3px"><rb-icon name="msolid" size="15"></rb-icon></span>
        </icon-grid>
      </ribbon-group>
      <ribbon-group label="编辑" w="154" pad="3">
        <rb-big icon="select" label="选择" arrow style="margin-right:1px"></rb-big>
        <rb-big icon="pull" label="拉动" on></rb-big>
        <rb-big icon="move" label="移动"></rb-big>
        <rb-big icon="fill" label="填充"></rb-big>
      </ribbon-group>
      <ribbon-group label="相交" w="115" pad="3">
        <rb-big icon="combine" label="组合"></rb-big>
        <icon-grid cols="1" cw="62" style="justify-items:start;margin-left:4px">
          <rb-small icon="splitbody" label="拆分主体"></rb-small><rb-small icon="splitface" label="拆分面"></rb-small><rb-small icon="projectb" label="投影"></rb-small>
        </icon-grid>
      </ribbon-group>
      <ribbon-group label="插入" w="208" pad="2">
        <icon-grid cols="2" cw="25">
          <rb-icon name="plane"></rb-icon><rb-icon name="cyl"></rb-icon>
          <rb-icon name="axis"></rb-icon><rb-icon name="sphere"></rb-icon>
          <rb-icon name="origin"></rb-icon><rb-icon name="shell"></rb-icon>
        </icon-grid>
        <rb-big icon="file" label="文件" style="margin-left:2px"></rb-big>
        <rb-big icon="pcb" label="导入" style="margin-left:1px"><span class="pcb">PCB</span></rb-big>
        <big-3d style="margin-left:6px"></big-3d>
      </ribbon-group>
    </ribbon-bar>
    <div class="main">
      <div class="strip"><div class="vt">图库</div><div class="vt">图层</div></div>
      <div class="side">
        <side-panel class="a" label="结构">
          <div style="padding-top:1px">
            <tree-row root icon="docbox" label="设计2*"></tree-row>
            <tree-row icon="treecube" label="实体"></tree-row>
            <tree-row icon="surface" label="表面"></tree-row>
          </div>
        </side-panel>
        <side-panel class="b" label="选项 - 拉动"><options-body></options-body></side-panel>
      </div>
      <div class="gap"></div>
      <canvas-view></canvas-view>
    </div>`;
  }
}

customElements.define("rb-icon", RbIcon);
customElements.define("title-bar", TitleBar);
customElements.define("tab-strip", TabStrip);
customElements.define("ribbon-bar", RibbonBar);
customElements.define("ribbon-group", RibbonGroup);
customElements.define("rb-big", RbBig);
customElements.define("big-3d", Big3d);
customElements.define("rb-small", RbSmall);
customElements.define("icon-grid", IconGrid);
customElements.define("side-panel", SidePanel);
customElements.define("tree-row", TreeRow);
customElements.define("options-body", OptionsBody);
customElements.define("tool-btn", ToolBtn);
customElements.define("model-view", ModelView);
customElements.define("view-triad", ViewTriad);
customElements.define("canvas-view", CanvasView);
customElements.define("dsm-app", DsmApp);
</script>
</body>
</html>
